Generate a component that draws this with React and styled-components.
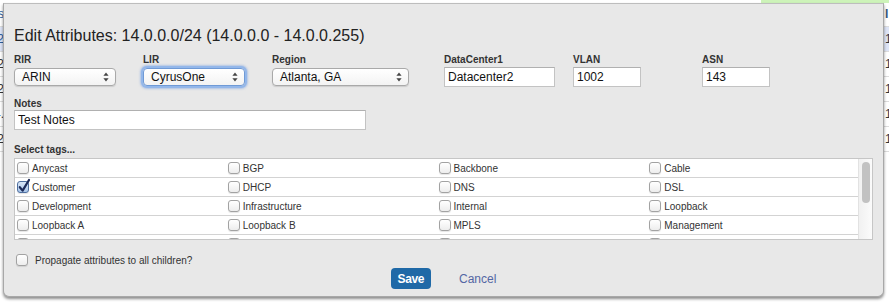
import React from "react";
import styled, { createGlobalStyle } from "styled-components";

const GlobalStyle = createGlobalStyle`
  html, body {
    margin: 0;
    padding: 0;
    background: #fff;
    overflow: hidden;
  }
  body {
    font-family: "Liberation Sans", Arial, Helvetica, sans-serif;
  }
`;

const Page = styled.div`
  position: relative;
  width: 889px;
  height: 305px;
  overflow: hidden;
  background: #fff;
`;

const TopBar = styled.div`
  display: flex;
  height: 3px;
`;

const TopWhite = styled.div`
  flex: 0 0 761px;
`;

const TopGreen = styled.div`
  flex: 1;
  background: #cdf3b9;
`;

const BgRow = styled.div`
  display: flex;
  justify-content: space-between;
  height: ${(p) => p.$h || 24}px;
  border-bottom: 1px solid #dcdcdc;
  background: ${(p) => (p.$hl ? "#dde4f6" : "transparent")};
  font-size: 12px;
  line-height: ${(p) => p.$h || 24}px;
`;

const BgLeft = styled.div`
  flex: 0 0 4px;
  display: flex;
  justify-content: flex-end;
  overflow: hidden;
  white-space: nowrap;
  color: ${(p) => p.$color || "#333"};
`;

const BgRight = styled.div`
  flex: 0 0 4px;
  padding-left: 1px;
  overflow: hidden;
  white-space: nowrap;
  color: ${(p) => p.$color || "#333"};
  font-weight: ${(p) => (p.$bold ? "bold" : "normal")};
`;

const Dialog = styled.div`
  position: absolute;
  top: 3px;
  left: 3px;
  width: 881px;
  box-sizing: border-box;
  padding: 22px 10px 7px;
  background: #e8e8e8;
  border: 1px solid #a8a8a8;
  border-top-color: #bdbdbd;
  border-radius: 0 0 6px 6px;
  box-shadow: 0 2px 3px rgba(0, 0, 0, 0.45);
  color: #222;
`;

const Title = styled.h3`
  margin: 0 0 8px;
  font-size: 16px;
  font-weight: normal;
  line-height: 20px;
  color: #222;
`;

const FieldRow = styled.div`
  display: flex;
  align-items: flex-start;
`;

const Field = styled.div`
  flex: 0 0 ${(p) => (p.$w ? `${p.$w}px` : "auto")};
  display: flex;
  flex-direction: column;
  align-items: ${(p) => (p.$stretch ? "stretch" : "flex-start")};
  margin-top: ${(p) => p.$top || 0}px;
`;

const Label = styled.label`
  display: block;
  font-size: 10px;
  font-weight: bold;
  line-height: 12px;
  color: #333;
  margin-bottom: ${(p) => p.$gap ?? 1}px;
`;

const SelectBox = styled.div`
  box-sizing: border-box;
  display: flex;
  align-items: center;
  justify-content: space-between;
  width: ${(p) => p.$w}px;
  height: 18px;
  margin-top: 1px;
  padding: 0 6px 0 7px;
  border: 1px solid ${(p) => (p.$focus ? "#6f9ad6" : "#a9a9a9")};
  border-radius: 4px;
  background: linear-gradient(#ffffff, #f3f3f3);
  box-shadow: ${(p) =>
    p.$focus
      ? "0 0 0 2px #93b7ea, 0 0 2px 3px rgba(120,160,225,0.5)"
      : "0 1px 1px rgba(0,0,0,0.12)"};
  font-size: 12px;
  color: #111;
  white-space: nowrap;
`;

const TextInput = styled.input`
  box-sizing: border-box;
  width: ${(p) => p.$w}px;
  height: 20px;
  margin: 0;
  padding: 0 3px;
  border: 1px solid #c3c3c3;
  border-top-color: #b0b0b0;
  background: #fff;
  font-family: "Liberation Sans", Arial, Helvetica, sans-serif;
  font-size: 12px;
  color: #111;
  outline: none;
`;

const TagsBox = styled.div`
  display: flex;
  height: 80px;
  margin-top: 2px;
  border: 1px solid #c6c6c6;
  background: #fff;
  overflow: hidden;
`;

const TagList = styled.div`
  flex: 1;
  overflow: hidden;
`;

const ScrollTrack = styled.div`
  flex: 0 0 14px;
  box-sizing: border-box;
  padding: 3px 2px 0 3px;
  border-left: 1px solid #e2e2e2;
  background: linear-gradient(to right, #f1f1f1, #fbfbfb);
`;

const ScrollThumb = styled.div`
  height: 41px;
  border-radius: 4px;
  background: #c2c2c2;
`;

const TagRow = styled.div`
  display: grid;
  grid-template-columns: repeat(4, 1fr);
  height: 18px;
  border-bottom: 1px solid #d3d3d3;
`;

const Tag = styled.div`
  display: flex;
  align-items: center;
  gap: 3px;
  padding-left: 2px;
  font-size: 10px;
  color: #333;
  white-space: nowrap;
`;

const Box = styled.span`
  position: relative;
  flex: 0 0 auto;
  display: inline-block;
  width: 10px;
  height: 10px;
  border: 1px solid ${(p) => (p.$checked ? "#4f6f9f" : "#a2a2a2")};
  border-radius: 3px;
  background: ${(p) =>
    p.$checked
      ? "linear-gradient(#d8e6f7, #a9c6ea)"
      : "linear-gradient(#ffffff, #ededed)"};
  box-shadow: 0 1px 1px rgba(0, 0, 0, 0.1);
`;

const CheckMark = styled.svg`
  position: absolute;
  left: 0;
  top: -3px;
  overflow: visible;
`;

const OptionRow = styled.div`
  display: flex;
  align-items: center;
  gap: 7px;
  height: 14px;
  margin-top: 13px;
  padding-left: 2px;
  font-size: 10px;
  color: #333;
`;

const Actions = styled.div`
  display: flex;
  justify-content: center;
  align-items: center;
  gap: 28px;
  margin-top: 1px;
`;

const SaveButton = styled.button`
  height: 21px;
  padding: 0 7px;
  border: 0;
  border-radius: 4px;
  background: #1f69a7;
  color: #fff;
  font-family: "Liberation Sans", Arial, Helvetica, sans-serif;
  font-size: 12px;
  font-weight: bold;
  letter-spacing: -0.4px;
`;

const CancelLink = styled.a`
  font-size: 12px;
  color: #5467a4;
  text-decoration: none;
`;

const Arrows = () => (
  <svg width="6" height="10" viewBox="0 0 6 10">
    <path d="M3 0.5 L5.6 3.8 L0.4 3.8 Z" fill="#444" />
    <path d="M3 9.5 L5.6 6.2 L0.4 6.2 Z" fill="#444" />
  </svg>
);

const Checkbox = ({ checked }) => (
  <Box $checked={checked}>
    {checked && (
      <CheckMark width="12" height="14" viewBox="0 0 12 14">
        <path
          d="M1.8 8.2 L4.6 11.6 L11 1"
          fill="none"
          stroke="#1c2a58"
          strokeWidth="2.2"
          strokeLinecap="round"
          strokeLinejoin="round"
        />
      </CheckMark>
    )}
  </Box>
);

const tags = [
  "Anycast", "BGP", "Backbone", "Cable",
  "Customer", "DHCP", "DNS", "DSL",
  "Development", "Infrastructure", "Internal", "Loopback",
  "Loopback A", "Loopback B", "MPLS", "Management",
  "Monitoring", "NAT", "Network", "Office",
  "Private", "Public", "Reserved", "Server",
  "Storage", "Transit", "VPN", "Wireless",
];

const rows = [];
for (let i = 0; i < tags.length; i += 4) rows.push(tags.slice(i, i + 4));

const bgRows = [
  { left: "10.2", right: "1", hl: true, lc: "#2b5d9c" },
  { left: "10.2", right: "1" },
  { left: "10.2", right: "1" },
  { left: "10.4.", right: "1" },
  { left: "10.2", right: "1" },
];

export default function App() {
  return (
    <Page>
      <GlobalStyle />
      <TopBar>
        <TopWhite />
        <TopGreen />
      </TopBar>
      <BgRow $h={23}>
        <BgLeft $color="#2b5d9c">Address</BgLeft>
        <BgRight $color="#3b5878" $bold>
          I
        </BgRight>
      </BgRow>
      {bgRows.map((r, i) => (
        <BgRow key={i} $hl={r.hl}>
          <BgLeft $color={r.lc}>{r.left}</BgLeft>
          <BgRight>{r.right}</BgRight>
        </BgRow>
      ))}

      <Dialog>
        <Title>Edit Attributes: 14.0.0.0/24 (14.0.0.0 - 14.0.0.255)</Title>

        <FieldRow>
          <Field $w={129}>
            <Label>RIR</Label>
            <SelectBox $w={102}>
              ARIN <Arrows />
            </SelectBox>
          </Field>
          <Field $w={129}>
            <Label>LIR</Label>
            <SelectBox $w={102} $focus>
              CyrusOne <Arrows />
            </SelectBox>
          </Field>
          <Field $w={172}>
            <Label>Region</Label>
            <SelectBox $w={137}>
              Atlanta, GA <Arrows />
            </SelectBox>
          </Field>
          <Field $w={129}>
            <Label>DataCenter1</Label>
            <TextInput $w={111} readOnly defaultValue="Datacenter2" />
          </Field>
          <Field $w={129}>
            <Label>VLAN</Label>
            <TextInput $w={68} readOnly defaultValue="1002" />
          </Field>
          <Field $w={129}>
            <Label>ASN</Label>
            <TextInput $w={68} readOnly defaultValue="143" />
          </Field>
        </FieldRow>

        <Field $top={11}>
          <Label $gap={0}>Notes</Label>
          <TextInput $w={352} readOnly defaultValue="Test Notes" />
        </Field>

        <Field $top={14} $stretch>
          <Label $gap={0}>Select tags...</Label>
          <TagsBox>
            <TagList>
              {rows.map((row, i) => (
                <TagRow key={i}>
                  {row.map((t) => (
                    <Tag key={t}>
                      <Checkbox checked={t === "Customer"} />
                      {t}
                    </Tag>
                  ))}
                </TagRow>
              ))}
            </TagList>
            <ScrollTrack>
              <ScrollThumb />
            </ScrollTrack>
          </TagsBox>
        </Field>

        <OptionRow>
          <Checkbox />
          Propagate attributes to all children?
        </OptionRow>

        <Actions>
          <SaveButton>Save</SaveButton>
          <CancelLink href="#">Cancel</CancelLink>
        </Actions>
      </Dialog>
    </Page>
  );
}
